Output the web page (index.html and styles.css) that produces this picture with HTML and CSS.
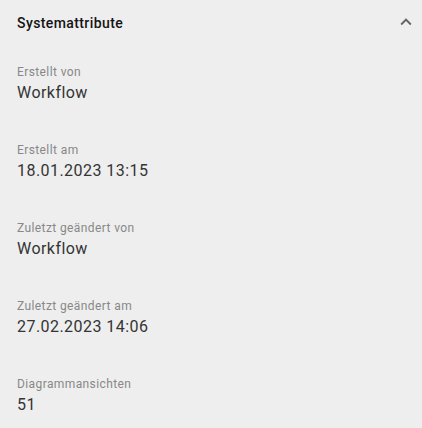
FILE: index.html
```html
<!DOCTYPE html>
<html>
<head>
<meta charset="utf-8">
<link rel="stylesheet" href="styles.css">
</head>
<body>
<div class="panel">
  <div class="header">
    <span class="title">Systemattribute</span>
    <svg class="chev" width="22" height="22" viewBox="0 0 24 24"><path d="M7.41 15.41 12 10.83l4.59 4.58L18 14l-6-6-6 6z" fill="#626262"/></svg>
  </div>
  <div class="fields">
    <div class="field"><div class="label">Erstellt von</div><div class="value">Workflow</div></div>
    <div class="field"><div class="label">Erstellt am</div><div class="value">18.01.2023 13:15</div></div>
    <div class="field"><div class="label">Zuletzt geändert von</div><div class="value">Workflow</div></div>
    <div class="field"><div class="label">Zuletzt geändert am</div><div class="value">27.02.2023 14:06</div></div>
    <div class="field"><div class="label">Diagrammansichten</div><div class="value">51</div></div>
  </div>
</div>
</body>
</html>
```
FILE: styles.css
```css
html, body {
  margin: 0;
  padding: 0;
  background: #eeeeee;
  font-family: Roboto, "Noto Sans", sans-serif;
}
.panel {
  width: 422px;
  height: 428px;
  background: #eeeeee;
}
.header {
  display: flex;
  align-items: flex-start;
  justify-content: space-between;
  height: 46px;
  padding: 0 5px 0 17px;
  box-sizing: border-box;
}
.title {
  margin-top: 15px;
  font-size: 14px;
  line-height: 16px;
  font-weight: 500;
  color: #141414;
  letter-spacing: 0.4px;
}
.chev {
  margin-top: 11px;
  width: 22px;
  height: 22px;
}
.fields {
  display: flex;
  flex-direction: column;
  padding: 18px 17px 0 17px;
  gap: 39px;
}
.field {
  display: flex;
  flex-direction: column;
  gap: 3px;
}
.label {
  font-size: 12px;
  line-height: 16px;
  color: #888888;
  letter-spacing: 0.4px;
}
.value {
  font-size: 16px;
  line-height: 20px;
  color: #343434;
  letter-spacing: 0.45px;
}
```
